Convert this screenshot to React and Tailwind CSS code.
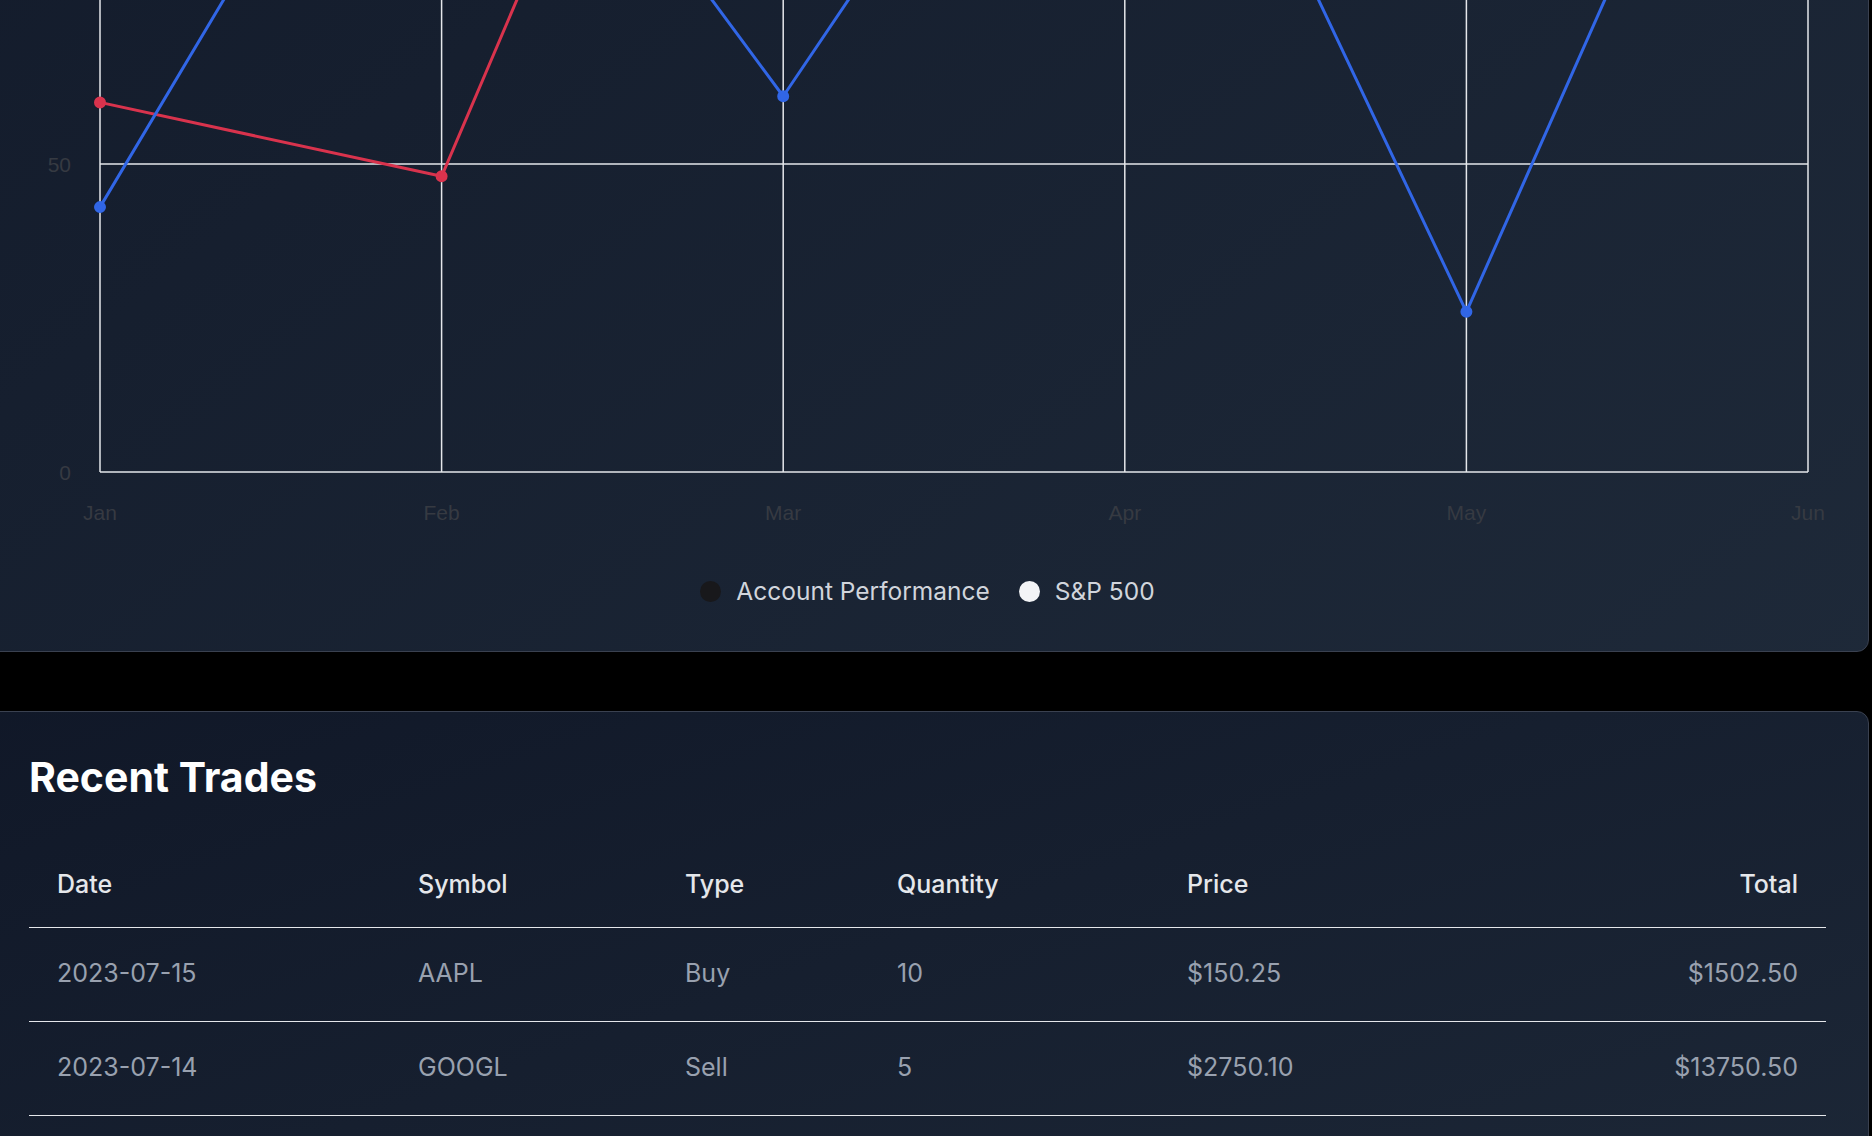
const months = ['Jan', 'Feb', 'Mar', 'Apr', 'May', 'Jun']

const performance = [
  { month: 'Jan', account: 60, sp500: 43 },
  { month: 'Feb', account: 48, sp500: 136 },
  { month: 'Mar', account: 178, sp500: 61 },
  { month: 'Apr', account: 165, sp500: 143 },
  { month: 'May', account: 190, sp500: 26 },
  { month: 'Jun', account: 172, sp500: 151 },
]

const trades = [
  { date: '2023-07-15', symbol: 'AAPL', type: 'Buy', quantity: 10, price: '$150.25', total: '$1502.50' },
  { date: '2023-07-14', symbol: 'GOOGL', type: 'Sell', quantity: 5, price: '$2750.10', total: '$13750.50' },
  { date: '2023-07-13', symbol: 'MSFT', type: 'Buy', quantity: 15, price: '$280.50', total: '$4207.50' },
  { date: '2023-07-12', symbol: 'TSLA', type: 'Sell', quantity: 8, price: '$720.30', total: '$5762.40' },
]

// plot area inside the svg
const W = 1797
const H = 1320
const left = 71
const right = 1779
const top = 20
const bottom = 1252
const maxY = 200

const x = (i) => left + (i * (right - left)) / (months.length - 1)
const y = (v) => bottom - (v / maxY) * (bottom - top)

function PerformanceChart() {
  const ticks = [0, 50, 100, 150, 200]
  const line = (key) => performance.map((d, i) => `${x(i)},${y(d[key])}`).join(' ')

  return (
    <svg width={W} height={H} className="block">
      {/* grid */}
      {ticks.map((t) => (
        <line key={t} x1={left} x2={right} y1={y(t)} y2={y(t)} stroke="#e5e7eb" strokeWidth="1.5" />
      ))}
      {months.map((m, i) => (
        <line key={m} x1={x(i)} x2={x(i)} y1={top} y2={bottom} stroke="#e5e7eb" strokeWidth="1.5" />
      ))}

      {/* axis labels */}
      {ticks.map((t) => (
        <text
          key={t}
          x={42}
          y={y(t)}
          dy="0.4em"
          textAnchor="end"
          fill="#363a42"
          fontSize="21"
          fontFamily="'Liberation Sans', Arial, sans-serif"
        >
          {t}
        </text>
      ))}
      {months.map((m, i) => (
        <text
          key={m}
          x={x(i)}
          y={1300}
          textAnchor="middle"
          fill="#363a42"
          fontSize="21"
          fontFamily="'Liberation Sans', Arial, sans-serif"
        >
          {m}
        </text>
      ))}

      {/* series */}
      <polyline points={line('account')} fill="none" stroke="#d9334d" strokeWidth="3" strokeLinejoin="round" />
      <polyline points={line('sp500')} fill="none" stroke="#3166e6" strokeWidth="3" strokeLinejoin="round" />
      {performance.map((d, i) => (
        <g key={d.month}>
          <circle cx={x(i)} cy={y(d.account)} r="4.5" fill="#d9334d" stroke="#d9334d" strokeWidth="3" />
          <circle cx={x(i)} cy={y(d.sp500)} r="4.5" fill="#3166e6" stroke="#3166e6" strokeWidth="3" />
        </g>
      ))}
    </svg>
  )
}

export default function App() {
  return (
    <div className="h-screen overflow-hidden bg-black font-['Inter','Noto_Sans',sans-serif]">
      <div className="mt-[-823px] ml-[-14px] w-[1883px] flex flex-col gap-[59px]">
        {/* Chart card */}
        <div className="rounded-[12px] border border-[#3a4150] bg-linear-to-br from-gray-900 to-gray-800 p-[42px]">
          <PerformanceChart />
          <div className="mt-[33px] flex items-center justify-center gap-[29px] text-[24.5px] leading-[36px] text-gray-300">
            <div className="flex items-center gap-[15px]">
              <span className="size-[21px] rounded-full bg-[#18181b]" />
              <span>Account Performance</span>
            </div>
            <div className="flex items-center gap-[15px]">
              <span className="size-[21px] rounded-full bg-gray-100" />
              <span>S&amp;P 500</span>
            </div>
          </div>
        </div>

        {/* Recent trades */}
        <div className="rounded-[12px] border border-[#3a4150] bg-linear-to-br from-gray-900 to-gray-800 p-[42px]">
          <h2 className="text-[41px] leading-[46px] font-bold text-white">Recent Trades</h2>
          <table className="mt-[42px] w-full table-fixed border-collapse text-[25px]">
            <colgroup>
              <col className="w-[361px]" />
              <col className="w-[267px]" />
              <col className="w-[212px]" />
              <col className="w-[290px]" />
              <col className="w-[341px]" />
              <col />
            </colgroup>
            <thead>
              <tr className="border-b border-gray-200">
                <th className="h-[85px] px-[28px] text-left font-medium text-gray-200">Date</th>
                <th className="h-[85px] px-[28px] text-left font-medium text-gray-200">Symbol</th>
                <th className="h-[85px] px-[28px] text-left font-medium text-gray-200">Type</th>
                <th className="h-[85px] px-[28px] text-left font-medium text-gray-200">Quantity</th>
                <th className="h-[85px] px-[28px] text-left font-medium text-gray-200">Price</th>
                <th className="h-[85px] px-[28px] text-right font-medium text-gray-200">Total</th>
              </tr>
            </thead>
            <tbody className="text-gray-400">
              {trades.map((t) => (
                <tr key={t.date} className="border-b border-gray-200">
                  <td className="h-[94px] px-[28px]">{t.date}</td>
                  <td className="h-[94px] px-[28px]">{t.symbol}</td>
                  <td className="h-[94px] px-[28px]">{t.type}</td>
                  <td className="h-[94px] px-[28px]">{t.quantity}</td>
                  <td className="h-[94px] px-[28px]">{t.price}</td>
                  <td className="h-[94px] px-[28px] text-right">{t.total}</td>
                </tr>
              ))}
            </tbody>
          </table>
        </div>
      </div>
    </div>
  )
}
